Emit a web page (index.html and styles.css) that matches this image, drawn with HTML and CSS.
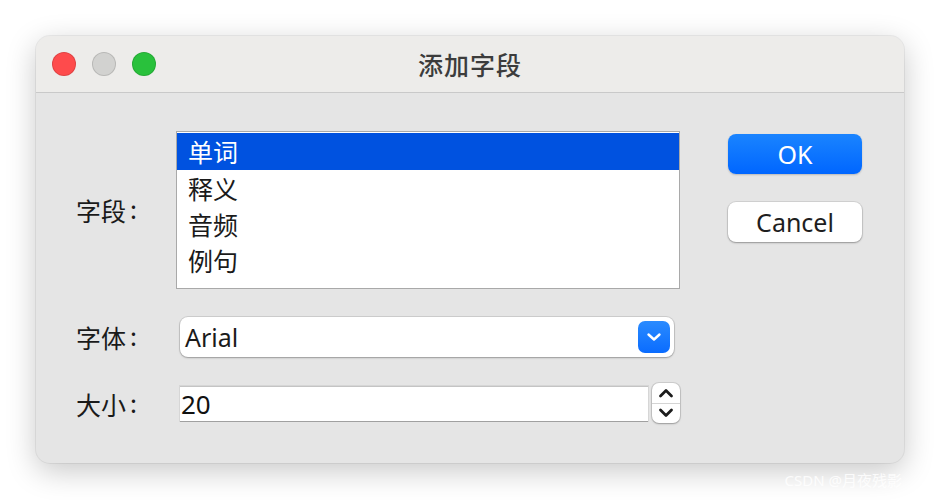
FILE: index.html
```html
<!DOCTYPE html>
<html lang="zh-CN">
<head>
    <meta charset="UTF-8">
    <meta name="viewport" content="width=device-width, initial-scale=1.0">
    <title>添加字段</title>
    <link rel="stylesheet" href="styles.css">
</head>
<body>
    <div class="window">
        <div class="titlebar">
            <div class="lights">
                <span class="light red"></span>
                <span class="light gray"></span>
                <span class="light green"></span>
            </div>
            <div class="title">添加字段</div>
        </div>
        <div class="content">
            <div class="form">
                <label class="label">字段<span class="colon">:</span></label>
                <div class="listbox">
                    <div class="item selected">单词</div>
                    <div class="item">释义</div>
                    <div class="item">音频</div>
                    <div class="item">例句</div>
                </div>

                <label class="label">字体<span class="colon">:</span></label>
                <div class="popup">
                    <span class="popup-value">Arial</span>
                    <span class="popup-arrow">
                        <svg width="16" height="10" viewBox="0 0 16 10"><path d="M2.5 2.5 L8 7.5 L13.5 2.5" fill="none" stroke="#fff" stroke-width="2.4" stroke-linecap="round" stroke-linejoin="round"/></svg>
                    </span>
                </div>

                <label class="label">大小<span class="colon">:</span></label>
                <div class="size-row">
                    <input class="number" type="text" value="20">
                    <div class="stepper">
                        <span class="step">
                            <svg width="16" height="10" viewBox="0 0 16 10"><path d="M2.5 8 L8 2.5 L13.5 8" fill="none" stroke="#1c1c1c" stroke-width="2.8" stroke-linecap="round" stroke-linejoin="round"/></svg>
                        </span>
                        <span class="step down">
                            <svg width="16" height="10" viewBox="0 0 16 10"><path d="M2.5 2 L8 7.5 L13.5 2" fill="none" stroke="#1c1c1c" stroke-width="2.8" stroke-linecap="round" stroke-linejoin="round"/></svg>
                        </span>
                    </div>
                </div>
            </div>
            <div class="buttons">
                <button class="btn ok">OK</button>
                <button class="btn cancel">Cancel</button>
            </div>
        </div>
    </div>
    <div class="watermark">CSDN @月夜残影</div>
</body>
</html>
```

FILE: styles.css
```css
body {
    margin: 0;
    padding: 0;
    width: 940px;
    height: 500px;
    background-color: #fff;
    font-family: "Noto Sans", "Noto Sans CJK SC", sans-serif;
    color: #1a1a1a;
    overflow: hidden;
    position: relative;
}
.window {
    margin: 36px 0 0 36px;
    width: 868px;
    height: 427px;
    border-radius: 14px;
    background-color: #e5e5e5;
    box-shadow: 0 8px 30px rgba(0, 0, 0, 0.22), 0 0 0 1px rgba(0, 0, 0, 0.06);
    overflow: hidden;
}
.titlebar {
    height: 56px;
    background-color: #edecea;
    border-bottom: 1px solid #c9c9c9;
    display: flex;
    align-items: center;
    position: relative;
}
.lights {
    display: flex;
    gap: 16px;
    padding-left: 16px;
}
.light {
    width: 22px;
    height: 22px;
    border-radius: 50%;
    border: 1px solid rgba(0, 0, 0, 0.12);
}
.light.red { background-color: #fe4b4c; }
.light.gray { background-color: #d2d2d0; }
.light.green { background-color: #29c13c; }
.title {
    position: absolute;
    left: 0;
    right: 0;
    text-align: center;
    font-size: 25px;
    letter-spacing: 1px;
    font-weight: 500;
    color: #3c3c3c;
    font-family: "Noto Sans CJK SC", sans-serif;
}
.content {
    display: flex;
    padding: 38px 0 0 41px;
}
.form {
    display: grid;
    grid-template-columns: 99px 504px;
    row-gap: 28px;
    align-items: center;
}
.label {
    font-family: "Noto Sans CJK SC", sans-serif;
    font-size: 25px;
    color: #1a1a1a;
    margin-left: -1px;
}
.colon {
    margin-left: 4px;
    position: relative;
    top: -2px;
}
.listbox {
    background-color: #fff;
    border: 1px solid #a9a9a9;
    padding-top: 1px;
    box-sizing: border-box;
    height: 158px;
}
.item {
    height: 36px;
    line-height: 36px;
    padding-left: 11px;
    font-family: "Noto Sans CJK SC", sans-serif;
    font-size: 25px;
}
.item.selected {
    background-color: #0052e0;
    color: #fff;
    height: 37px;
}
.popup {
    margin-left: 4px;
    width: 494px;
    height: 40px;
    box-sizing: border-box;
    background-color: #fff;
    border-radius: 8px;
    box-shadow: 0 0 0 1px rgba(0, 0, 0, 0.1), 0 1px 2px rgba(0, 0, 0, 0.25);
    display: flex;
    align-items: center;
    justify-content: space-between;
    padding: 0 4px 0 5px;
}
.popup-value {
    font-size: 25px;
}
.popup-arrow {
    width: 32px;
    height: 32px;
    border-radius: 7px;
    background: linear-gradient(#2a8bff, #0a6cff);
    display: flex;
    align-items: center;
    justify-content: center;
}
.size-row {
    margin: -2px 0 0 4px;
    display: flex;
    align-items: center;
    gap: 4px;
}
.number {
    width: 468px;
    height: 35px;
    box-sizing: border-box;
    border: none;
    border-top: 1px solid #c4c4c4;
    box-shadow: 0 1px 0 #a0a0a0, 0 0 0 1px #d6d6d6;
    padding: 0 0 0 1px;
    font-family: "Noto Sans", sans-serif;
    font-size: 26px;
    color: #111;
    background-color: #fff;
    outline: none;
}
.stepper {
    width: 28px;
    height: 40px;
    background-color: #fff;
    border-radius: 7px;
    box-shadow: 0 0 0 1px rgba(0, 0, 0, 0.1), 0 1px 2px rgba(0, 0, 0, 0.25);
    display: flex;
    flex-direction: column;
}
.step {
    flex: 1;
    display: flex;
    align-items: center;
    justify-content: center;
}
.step.down {
    border-top: 1px solid #d4d4d4;
}
.buttons {
    display: flex;
    flex-direction: column;
    gap: 28px;
    margin: 3px 0 0 48px;
}
.btn {
    width: 134px;
    height: 40px;
    border: none;
    border-radius: 8px;
    font-family: "Noto Sans", sans-serif;
    font-size: 25px;
    padding: 0;
}
.btn.ok {
    background: linear-gradient(#1a84ff, #0066ff);
    color: #fff;
    box-shadow: 0 1px 2px rgba(0, 0, 0, 0.2);
}
.btn.cancel {
    background-color: #fff;
    color: #1e1e1e;
    box-shadow: 0 0 0 1px rgba(0, 0, 0, 0.08), 0 1px 2px rgba(0, 0, 0, 0.3);
}
.watermark {
    position: absolute;
    right: 38px;
    bottom: 10px;
    font-family: "Noto Sans", "Noto Sans CJK SC", sans-serif;
    font-size: 15px;
    color: rgba(255, 255, 255, 0.85);
}
```
